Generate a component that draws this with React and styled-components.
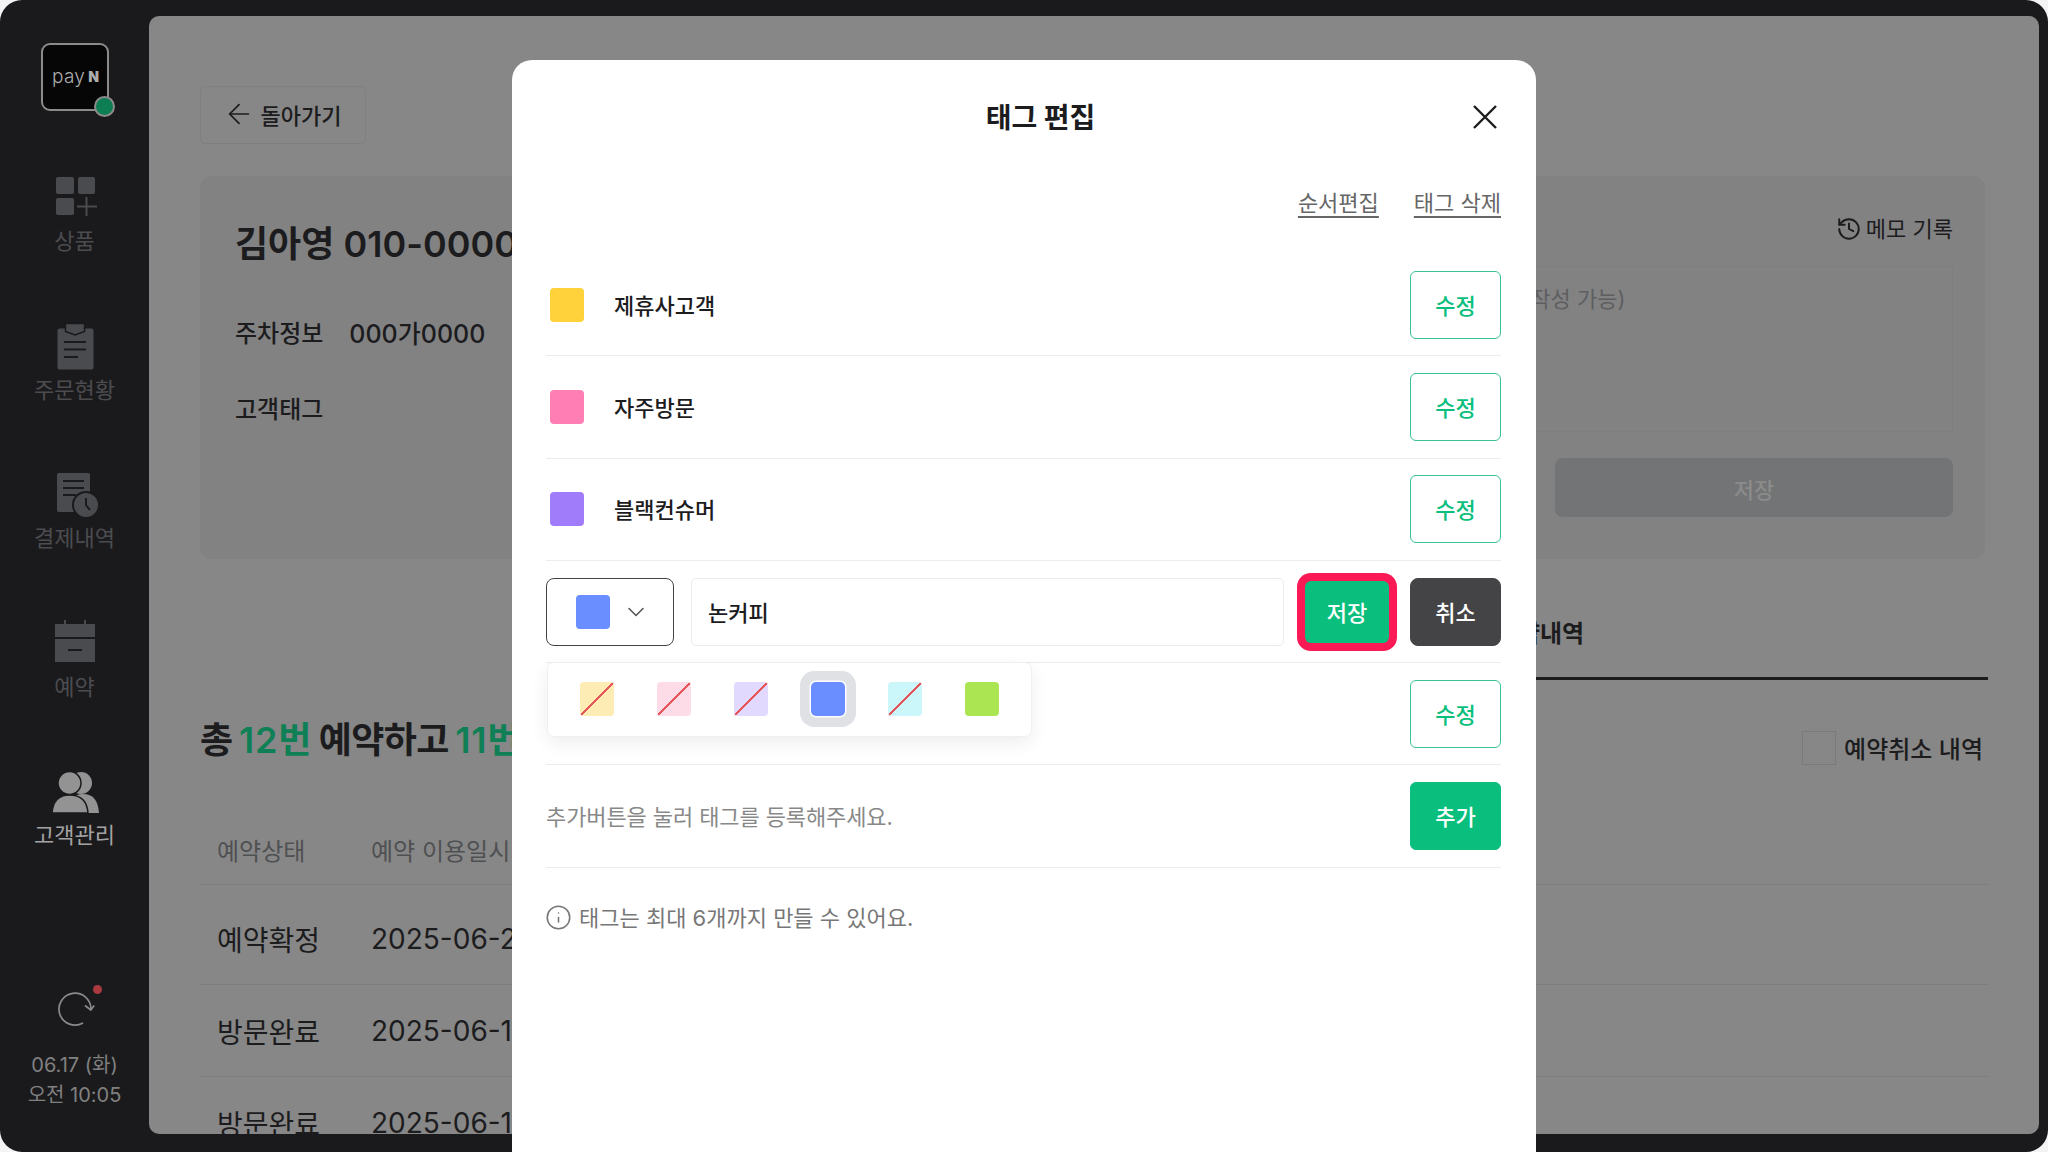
import React from "react"
import styled, { createGlobalStyle } from "styled-components"
import { ArrowLeft, ChevronDown, History, Info } from "lucide-react"

const GlobalStyle = createGlobalStyle`
  html, body {
    margin: 0;
    padding: 0;
    background: #f4f4f4;
  }
  * {
    box-sizing: border-box;
  }
  body {
    font-family: Inter, "Noto Sans CJK KR", sans-serif;
    color: #1c1c1e;
  }
`

const Screen = styled.div`
  position: relative;
  width: 2048px;
  height: 1152px;
  overflow: hidden;
`
const Shell = styled.div`
  width: 100%;
  height: 100%;
  display: flex;
  background: #1a1a1c;
  border-radius: 22px;
  overflow: hidden;
`

/* sidebar */
const Sidebar = styled.aside`
  width: 149px;
  flex: none;
  display: flex;
  flex-direction: column;
  align-items: center;
  padding: 43px 0 42px;
`
const LogoBox = styled.div`
  position: relative;
  width: 68px;
  height: 68px;
  flex: none;
  padding-left: 2px;
  display: flex;
  align-items: center;
  justify-content: center;
  gap: 3px;
  background: #060606;
  border: 2px solid #8b8b8b;
  border-radius: 9px;
  color: #acacac;
`
const LogoPay = styled.span`
  font-size: 19px;
  line-height: 20px;
  font-weight: 300;
  letter-spacing: 0.3px;
`
const LogoN = styled.span`
  font-size: 14px;
  line-height: 20px;
  font-weight: 900;
`
const LogoDot = styled.span`
  position: absolute;
  right: -8px;
  bottom: -8px;
  width: 21px;
  height: 21px;
  border-radius: 50%;
  background: #0d7d53;
  border: 2px solid #8b8b8b;
`
const NavList = styled.nav`
  margin-top: 62px;
  display: flex;
  flex-direction: column;
  align-items: center;
`
const NavItem = styled.div`
  height: 148.6px;
  display: flex;
  flex-direction: column;
  align-items: center;
  gap: 7px;
  color: ${(p) => (p.$active ? "#a3a3a3" : "#4c4c50")};
  font-size: 22px;
  line-height: 26px;
  svg {
    display: block;
  }
`
const SideFooter = styled.div`
  margin-top: auto;
  display: flex;
  flex-direction: column;
  align-items: center;
  color: #808080;
  font-size: 20px;
  line-height: 30px;
`
const RefreshWrap = styled.div`
  position: relative;
  width: 40px;
  height: 40px;
  margin-bottom: 20px;
`
const RedDot = styled.span`
  position: absolute;
  top: -5px;
  right: -7px;
  width: 9px;
  height: 9px;
  border-radius: 50%;
  background: #a83a40;
`

/* dimmed page behind the dialog */
const Main = styled.main`
  flex: 1;
  margin: 16px 9px 18px 0;
  padding: 70px 51px 0;
  background: #878787;
  border-radius: 10px;
  overflow: hidden;
`
const BackButton = styled.div`
  width: 166px;
  height: 58px;
  padding: 0 2px 3px 0;
  display: flex;
  align-items: center;
  justify-content: center;
  gap: 6px;
  border: 1px solid #7f7f7f;
  border-radius: 5px;
  font-size: 22px;
  font-weight: 500;
`
const InfoCard = styled.section`
  height: 383px;
  margin: 32px 3px 0 0;
  padding: 0 32px 0 35px;
  display: flex;
  justify-content: space-between;
  background: #828283;
  border-radius: 12px;
`
const Customer = styled.div`
  padding-top: 46px;
  white-space: nowrap;
`
const CustomerName = styled.h1`
  margin: 0 0 53px;
  font-size: 36px;
  line-height: 44px;
  font-weight: 600;
`
const InfoRow = styled.div`
  display: flex;
  gap: 26px;
  margin-bottom: 46px;
  font-size: 24px;
  line-height: 30px;
  font-weight: 500;
`
const PlateNumber = styled.span`
  font-size: 25px;
`
const Memo = styled.div`
  width: 733px;
  padding-top: 38px;
`
const MemoTitle = styled.div`
  display: flex;
  justify-content: flex-end;
  align-items: center;
  gap: 4px;
  font-size: 22px;
  line-height: 30px;
`
const MemoBox = styled.div`
  height: 166px;
  margin-top: 22px;
  padding: 17px;
  border: 1px solid #7e7e7f;
  color: #5e5e60;
  font-size: 22px;
  line-height: 30px;
`
const MemoSave = styled.div`
  width: 398px;
  height: 59px;
  margin: 26px 0 0 auto;
  display: flex;
  align-items: center;
  justify-content: center;
  background: #727475;
  border-radius: 8px;
  color: #8b8b8b;
  font-size: 22px;
  font-weight: 500;
`
const Tabs = styled.div`
  display: flex;
  justify-content: flex-end;
  margin-top: 29px;
`
const Tab = styled.div`
  width: 896px;
  height: 92px;
  padding-bottom: 2px;
  display: flex;
  align-items: center;
  justify-content: center;
  border-bottom: 3px solid #1c1c1e;
  font-size: 24px;
  font-weight: 600;
`
const Summary = styled.div`
  margin-top: 35px;
  padding-right: 5px;
  display: flex;
  justify-content: space-between;
  align-items: flex-end;
`
const SummaryTitle = styled.h2`
  margin: 0;
  font-size: 36px;
  line-height: 50px;
  font-weight: 600;
  letter-spacing: -0.6px;
  word-spacing: -2px;
  white-space: nowrap;
`
const Green = styled.span`
  color: #0f8055;
  letter-spacing: 0.8px;
`
const CancelFilter = styled.label`
  display: flex;
  align-items: center;
  gap: 8px;
  font-size: 24px;
  font-weight: 500;
`
const CheckBox = styled.span`
  width: 34px;
  height: 34px;
  border: 1px solid #7a7a7a;
`
const TableHead = styled.div`
  height: 70px;
  margin-top: 50px;
  padding-left: 17px;
  display: grid;
  grid-template-columns: 154px 1fr;
  align-items: center;
  border-bottom: 1px solid #7d7d7d;
  color: #4f5052;
  font-size: 24px;
`
const TableBody = styled.div`
  padding-top: 8px;
`
const TableRow = styled.div`
  height: 92px;
  padding-left: 17px;
  display: grid;
  grid-template-columns: 154px 1fr;
  align-items: center;
  border-bottom: 1px solid #7d7d7d;
  font-size: 28px;
`

/* dialog */
const Modal = styled.div`
  position: absolute;
  top: 60px;
  left: 512px;
  width: 1024px;
  height: 1120px;
  padding: 37px 35px 0 34px;
  background: #fff;
  border-radius: 20px;
`
const ModalHeader = styled.header`
  height: 40px;
  display: flex;
  align-items: center;
`
const ModalTitle = styled.h2`
  flex: 1;
  margin: 0;
  padding: 1px 0 0 63px;
  text-align: center;
  font-size: 28px;
  line-height: 40px;
  font-weight: 700;
`
const CloseIcon = styled.svg`
  width: 26px;
  height: 26px;
  margin-right: 3px;
`
const LinkBar = styled.div`
  margin: 51px 0 36px;
  display: flex;
  justify-content: flex-end;
  gap: 35px;
`
const TextLink = styled.a`
  color: #666;
  font-size: 22px;
  line-height: 30px;
  text-decoration: underline;
  text-underline-offset: 5px;
`
const Row = styled.div`
  position: relative;
  height: 102.3px;
  display: flex;
  align-items: center;
  border-bottom: 1px solid #ececec;
`
const EditRow = styled(Row)`
  gap: 17px;
`
const Swatch = styled.span`
  flex: none;
  width: 34px;
  height: 34px;
  border-radius: 4px;
  background-color: ${(p) => p.$color};
`
const TagSwatch = styled(Swatch)`
  margin: 0 30px 0 4px;
`
const TagName = styled.span`
  flex: 1;
  padding-bottom: 2px;
  font-size: 22px;
  font-weight: 500;
`
const Hint = styled.span`
  flex: 1;
  padding-bottom: 2px;
  color: #888;
  font-size: 22px;
  letter-spacing: -0.1px;
`
const OutlineButton = styled.button`
  flex: none;
  width: 91px;
  height: 68px;
  padding: 0 0 2px;
  background: #fff;
  border: 1.5px solid #38c492;
  border-radius: 6px;
  color: #0abf7d;
  font: 500 22px Inter, "Noto Sans CJK KR", sans-serif;
`
const FilledButton = styled(OutlineButton)`
  background: #0abf7d;
  border-color: #0abf7d;
  color: #fff;
`
const CancelButton = styled(OutlineButton)`
  background: #444446;
  border-color: #444446;
  border-radius: 8px;
  color: #fff;
`
const SaveButton = styled(OutlineButton)`
  width: 84px;
  height: 62px;
  margin: 0 4px;
  background: #0abf7d;
  border: 0;
  border-radius: 6px;
  box-shadow: 0 0 0 8px #fb1a55;
  color: #fff;
`
const ColorSelect = styled.div`
  flex: none;
  width: 128px;
  height: 68px;
  padding-left: 28.500px;
  display: flex;
  align-items: center;
  gap: 12px;
  border: 1.5px solid #444446;
  border-radius: 8px;
  color: #555;
`
const NameInput = styled.input`
  flex: 1;
  min-width: 0;
  height: 68px;
  padding: 0 16px 2px;
  border: 1px solid #ebebeb;
  border-radius: 5px;
  outline: none;
  color: #1c1c1e;
  font: 500 22px Inter, "Noto Sans CJK KR", sans-serif;
`
const Palette = styled.div`
  position: absolute;
  top: 101px;
  left: 1px;
  z-index: 2;
  width: 485px;
  height: 75px;
  padding: 0 32px;
  display: flex;
  align-items: center;
  gap: 43px;
  background: #fff;
  border: 1px solid #f0f0f0;
  border-radius: 7px;
  box-shadow: 0 6px 18px rgba(0, 0, 0, 0.07);
`
const PaletteSwatch = styled(Swatch)`
  ${(p) =>
    p.$used &&
    `background-image: linear-gradient(to bottom right, transparent calc(50% - 1.2px), #e5575a calc(50% - 1.2px), #e5575a calc(50% + 1.2px), transparent calc(50% + 1.2px));`}
  ${(p) =>
    p.$selected &&
    `border-radius: 5px; box-shadow: 0 0 0 1.5px #fff, 0 0 0 11px #dfe1e5;`}
`
const Notice = styled.p`
  margin: 35px 0 0 -1px;
  display: flex;
  align-items: center;
  gap: 7px;
  color: #777;
  font-size: 22px;
  line-height: 30px;
`

const darkIcon = "#4a4b4e"
const navBg = "#1a1a1c"

const ProductIcon = () => (
  <svg width="48" height="48" viewBox="0 0 48 48" fill={darkIcon}>
    <rect x="5" y="4" width="18" height="17" rx="2" />
    <rect x="27" y="4" width="17" height="17" rx="2" />
    <rect x="5" y="25" width="18" height="17" rx="2" />
    <path d="M26 33.500h20M35.500 24v19" stroke={darkIcon} strokeWidth="2" />
  </svg>
)

const OrderIcon = () => (
  <svg width="48" height="48" viewBox="0 0 48 48" fill={darkIcon}>
    <rect x="6.500" y="6.500" width="36" height="41" rx="2" />
    <path d="M14.500 1.500h19v8l-9.500 3.500-9.500-3.500z" stroke={navBg} strokeWidth="1.5" />
    <path d="M13 20h22M13 27.500h22M13 35h14" fill="none" stroke={navBg} strokeWidth="2" />
  </svg>
)

const PaymentIcon = () => (
  <svg width="48" height="48" viewBox="0 0 48 48" fill={darkIcon}>
    <rect x="6" y="3" width="33" height="39" rx="2" />
    <path d="M12 11h21M12 18h21M12 25h13" stroke={navBg} strokeWidth="2" />
    <circle cx="35" cy="35" r="13" stroke={navBg} strokeWidth="2" />
    <path d="M35 28v7l4 5" fill="none" stroke={navBg} strokeWidth="2" />
  </svg>
)

const BookingIcon = () => (
  <svg width="48" height="48" viewBox="0 0 48 48" fill={darkIcon}>
    <path d="M13 1h2v4h18V1h2v4h9v13H4V5h9z" />
    <path d="M4 20h40v23H4z" />
    <path d="M17 31h14" stroke={navBg} strokeWidth="2" />
  </svg>
)

const CustomerIcon = () => (
  <svg width="48" height="48" viewBox="0 0 48 48" fill="#939393">
    <circle cx="30" cy="16" r="11" />
    <path d="M14 46c1-13 8-19 18-19s15 6 16 19z" />
    <circle cx="18.500" cy="16" r="11.500" stroke={navBg} strokeWidth="1.5" />
    <path d="M1 46c1-13 7-18 17.500-18S36 33 37 46z" stroke={navBg} strokeWidth="1.5" />
  </svg>
)

const RefreshIcon = () => (
  <svg width="40" height="40" viewBox="0 0 40 40" fill="none" stroke="#8a8a8a" strokeWidth="1.7">
    <path d="M28 33A16 16 0 1 1 36 19.500" />
    <path d="M30 15.500l5.800 4.500 3.400-4.500" />
  </svg>
)

const navItems = [
  { label: "상품", Icon: ProductIcon },
  { label: "주문현황", Icon: OrderIcon },
  { label: "결제내역", Icon: PaymentIcon },
  { label: "예약", Icon: BookingIcon },
  { label: "고객관리", Icon: CustomerIcon, active: true },
]

const tags = [
  { name: "제휴사고객", color: "#ffd23c" },
  { name: "자주방문", color: "#ff7eb4" },
  { name: "블랙컨슈머", color: "#a07cfb" },
]

const paletteColors = [
  { color: "#fdedb5", used: true },
  { color: "#fddce8", used: true },
  { color: "#e2d9fe", used: true },
  { color: "#6a8dff", selected: true },
  { color: "#ccf7fa", used: true },
  { color: "#ace552" },
]

const bookings = [
  { status: "예약확정", date: "2025-06-20 11:00" },
  { status: "방문완료", date: "2025-06-14 13:00" },
  { status: "방문완료", date: "2025-06-10 18:00" },
]

const App = () => {
  return (
    <Screen>
      <GlobalStyle />
      <Shell>
        <Sidebar>
          <LogoBox>
            <LogoPay>pay</LogoPay>
            <LogoN>N</LogoN>
            <LogoDot />
          </LogoBox>
          <NavList>
            {navItems.map(({ label, Icon, active }) => (
              <NavItem key={label} $active={active}>
                <Icon />
                {label}
              </NavItem>
            ))}
          </NavList>
          <SideFooter>
            <RefreshWrap>
              <RefreshIcon />
              <RedDot />
            </RefreshWrap>
            <div>06.17 (화)</div>
            <div>오전 10:05</div>
          </SideFooter>
        </Sidebar>
        <Main>
          <BackButton>
            <ArrowLeft size={32} strokeWidth={1.3} />
            돌아가기
          </BackButton>
          <InfoCard>
            <Customer>
              <CustomerName>김아영 010-0000-0000</CustomerName>
              <InfoRow>
                <span>주차정보</span>
                <PlateNumber>000가0000</PlateNumber>
              </InfoRow>
              <InfoRow>고객태그</InfoRow>
            </Customer>
            <Memo>
              <MemoTitle>
                <History size={26} strokeWidth={1.8} />
                메모 기록
              </MemoTitle>
              <MemoBox>메모를 입력하세요. (100자까지 작성 가능)</MemoBox>
              <MemoSave>저장</MemoSave>
            </Memo>
          </InfoCard>
          <Tabs>
            <Tab>예약내역</Tab>
          </Tabs>
          <Summary>
            <SummaryTitle>
              총 <Green>12번</Green> 예약하고 <Green>11번</Green> 방문했어요
            </SummaryTitle>
            <CancelFilter>
              <CheckBox />
              예약취소 내역
            </CancelFilter>
          </Summary>
          <TableHead>
            <span>예약상태</span>
            <span>예약 이용일시</span>
          </TableHead>
          <TableBody>
            {bookings.map((b) => (
              <TableRow key={b.date}>
                <span>{b.status}</span>
                <span>{b.date}</span>
              </TableRow>
            ))}
          </TableBody>
        </Main>
      </Shell>
      <Modal>
        <ModalHeader>
          <ModalTitle>태그 편집</ModalTitle>
          <CloseIcon viewBox="0 0 26 26" fill="none" stroke="#1c1c1e" strokeWidth="2.4">
            <path d="M2 2l22 22M24 2L2 24" />
          </CloseIcon>
        </ModalHeader>
        <LinkBar>
          <TextLink>순서편집</TextLink>
          <TextLink>태그 삭제</TextLink>
        </LinkBar>
        {tags.map((tag) => (
          <Row key={tag.name}>
            <TagSwatch $color={tag.color} />
            <TagName>{tag.name}</TagName>
            <OutlineButton>수정</OutlineButton>
          </Row>
        ))}
        <EditRow>
          <ColorSelect>
            <Swatch $color="#6a8dff" />
            <ChevronDown size={28} strokeWidth={1.3} />
          </ColorSelect>
          <NameInput defaultValue="논커피" />
          <SaveButton>저장</SaveButton>
          <CancelButton>취소</CancelButton>
          <Palette>
            {paletteColors.map((c) => (
              <PaletteSwatch key={c.color} $color={c.color} $used={c.used} $selected={c.selected} />
            ))}
          </Palette>
        </EditRow>
        <Row>
          <TagName />
          <OutlineButton>수정</OutlineButton>
        </Row>
        <Row>
          <Hint>추가버튼을 눌러 태그를 등록해주세요.</Hint>
          <FilledButton>추가</FilledButton>
        </Row>
        <Notice>
          <Info size={27} strokeWidth={1.4} />
          태그는 최대 6개까지 만들 수 있어요.
        </Notice>
      </Modal>
    </Screen>
  )
}

export default App
